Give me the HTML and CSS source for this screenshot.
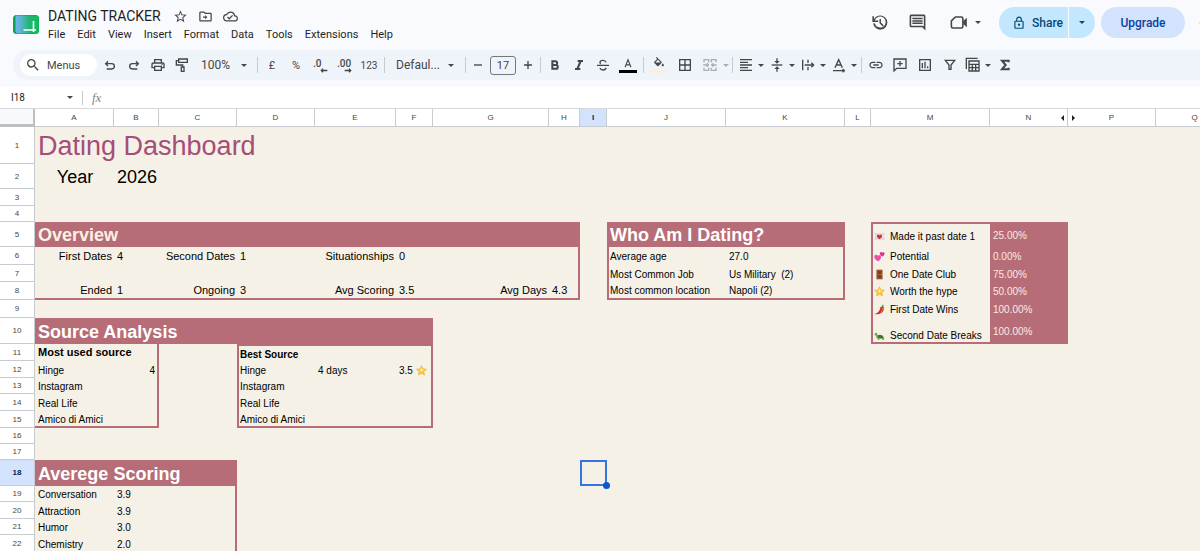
FILE: index.html
```html
<!DOCTYPE html>
<html lang="en">
<head>
<meta charset="UTF-8">
<meta name="viewport" content="width=device-width, initial-scale=1.0">
<title>DATING TRACKER</title>
<link rel="stylesheet" href="styles.css">
</head>
<body>

<svg class="sprite" aria-hidden="true">
  <symbol id="star" viewBox="0 0 16 16">
    <path d="M8 1l2.100 4.600 5 .6-3.700 3.400 1 4.900L8 12.100l-4.400 2.400 1-4.900L.9 6.200l5-.6z" fill="#fbc634" stroke="#eda52c" stroke-width=".8" stroke-linejoin="round"/>
    <path d="M8 3.500l1.300 3.200 3.200.4-3.600 1.400L8 11 7 8.500 3.500 7.100l3.300-.4z" fill="#fff0a0"/>
  </symbol>
</svg>

<header class="header">
  <svg class="logo" viewBox="0 0 26 19" aria-label="Sheets home">
    <defs>
      <linearGradient id="logoFill" x1="0" x2="1" y1="0" y2="0">
        <stop offset="0" stop-color="#6db5ee"/>
        <stop offset=".25" stop-color="#58b6c8"/>
        <stop offset=".6" stop-color="#1fb574"/>
        <stop offset="1" stop-color="#0fbd58"/>
      </linearGradient>
    </defs>
    <rect width="26" height="19" rx="3.500" fill="#12a150"/>
    <path d="M3 .5h20.500a2 2 0 0 1 2 2v14a2 2 0 0 1-2 2H5a2.500 2.500 0 0 1-2.500-2.500V2z" fill="url(#logoFill)"/>
    <path d="M10.500 15h12.500M20.500 6v11" stroke="#fff" stroke-width="1.600" fill="none"/>
  </svg>
  <div class="doc">
    <div class="doc-title">
      <h1>DATING TRACKER</h1>
      <button aria-label="Star"><svg viewBox="0 0 24 24"><path d="M22 9.240l-7.190-.62L12 2 9.190 8.630 2 9.240l5.460 4.730L5.820 21 12 17.270 18.180 21l-1.630-7.030L22 9.240zM12 15.400l-3.760 2.270 1-4.280-3.320-2.880 4.380-.38L12 6.100l1.710 4.040 4.380.38-3.320 2.880 1 4.280L12 15.400z"/></svg></button>
      <button aria-label="Move"><svg viewBox="0 0 24 24"><path d="M20 6h-8l-2-2H4c-1.100 0-2 .9-2 2v12c0 1.100.9 2 2 2h16c1.100 0 2-.9 2-2V8c0-1.100-.9-2-2-2zm0 12H4V6h5.170l2 2H20v10zm-8.500-1.500L15 13l-3.500-3.500v2.500H8v2h3.500z"/></svg></button>
      <button aria-label="Saved to Drive"><svg viewBox="0 0 24 24"><path d="M19.350 10.040A7.490 7.490 0 0 0 12 4C9.110 4 6.600 5.640 5.350 8.040A5.994 5.994 0 0 0 0 14c0 3.310 2.690 6 6 6h13c2.760 0 5-2.240 5-5 0-2.640-2.050-4.780-4.650-4.960zM19 18H6c-2.210 0-4-1.790-4-4 0-2.050 1.530-3.760 3.560-3.970l1.070-.11.5-.95A5.469 5.469 0 0 1 12 6c2.620 0 4.880 1.860 5.390 4.430l.3 1.500 1.530.11A2.980 2.980 0 0 1 22 15c0 1.650-1.350 3-3 3zm-9-3.820l-2.090-2.090L6.500 13.500 10 17l6.010-6.010-1.410-1.410z"/></svg></button>
    </div>
    <nav class="menu">
      <button>File</button>
      <button>Edit</button>
      <button>View</button>
      <button>Insert</button>
      <button>Format</button>
      <button>Data</button>
      <button>Tools</button>
      <button>Extensions</button>
      <button>Help</button>
    </nav>
  </div>
  <div class="actions">
    <button class="action" aria-label="Version history"><svg viewBox="0 0 24 24"><path d="M13 3a9 9 0 0 0-8 4.900V4H3v7.500h7.500v-2H6.100A7 7 0 1 1 6 12.800l-2 .5A9 9 0 1 0 13 3zm-1 4.500V13l4 4 1.300-1.400-3.500-3.500V7.500z"/></svg></button>
    <button class="action" aria-label="Comments"><svg viewBox="0 0 24 24"><path d="M22 4c0-1.100-.9-2-2-2H4c-1.100 0-2 .9-2 2v12c0 1.100.9 2 2 2h14l4 4V4zm-2 13.200L18.800 16H4V4h16v13.200zM5.500 12h13v2h-13zm0-3h13v2h-13zm0-3h13v2h-13z"/></svg></button>
    <button class="action meet" aria-label="Join a call"><svg viewBox="0 0 24 24"><path d="M8 5h7.500a2 2 0 0 1 2 2v10a2 2 0 0 1-2 2H5a2 2 0 0 1-2-2v-7z" fill="none" stroke="#444746" stroke-width="2" stroke-linejoin="round"/><path d="M18 10l4.500-4v12L18 14z"/></svg><span class="caret"></span></button>
    <div class="share">
      <button class="share-main"><svg viewBox="0 0 24 24"><path d="M18 8h-1V6A5 5 0 0 0 7 6v2H6c-1.100 0-2 .9-2 2v10c0 1.100.9 2 2 2h12c1.100 0 2-.9 2-2V10c0-1.100-.9-2-2-2zM9 6a3 3 0 0 1 6 0v2H9zm9 14H6V10h12zm-6-3a2 2 0 1 0 0-4 2 2 0 0 0 0 4z"/></svg>Share</button>
      <button class="share-more" aria-label="Share options"><span class="caret"></span></button>
    </div>
    <button class="upgrade">Upgrade</button>
    <svg class="spark" viewBox="0 0 16 16"><path d="M0 8q7-1 8-8 1 7 8 8-7 1-8 8-1-7-8-8z" fill="#fbbc04"/></svg>
  </div>
</header>

<div class="toolbar">
  <button class="menus"><svg viewBox="0 0 24 24"><path d="M15.500 14h-.79l-.28-.27A6.471 6.471 0 0 0 16 9.500 6.500 6.500 0 1 0 9.500 16c1.610 0 3.090-.59 4.230-1.570l.27.28v.79l5 4.990L20.490 19l-4.990-5zm-6 0C7.010 14 5 11.990 5 9.500S7.010 5 9.500 5 14 7.010 14 9.500 11.990 14 9.500 14z"/></svg>Menus</button>
  <button aria-label="Undo"><svg viewBox="0 0 24 24"><path d="M9 6.500L5.500 10 9 13.500M6 10h8.500a4 4 0 0 1 0 8H7" class="line"/></svg></button>
  <button aria-label="Redo"><svg viewBox="0 0 24 24"><path d="M15 6.500l3.500 3.500-3.500 3.500M18 10H9.500a4 4 0 0 0 0 8H17" class="line"/></svg></button>
  <button aria-label="Print"><svg viewBox="0 0 24 24"><path d="M19 8h-1V3H6v5H5c-1.660 0-3 1.340-3 3v6h4v4h12v-4h4v-6c0-1.660-1.340-3-3-3zM8 5h8v3H8V5zm8 14H8v-4h8v4zm4-4h-2v-2H6v2H4v-4c0-.55.45-1 1-1h14c.55 0 1 .45 1 1v4z"/><circle cx="18" cy="11.500" r="1"/></svg></button>
  <button aria-label="Paint format"><svg viewBox="0 0 24 24"><path d="M7 3h13v5H7zM7 5.500H3.500V12H13v3M11 15h4v6.500h-4z" class="line"/></svg></button>
  <label class="pick zoom"><select aria-label="Zoom"><option>100%</option></select><span class="caret"></span></label>
  <span class="sep"></span>
  <button aria-label="Format as currency">£</button>
  <button aria-label="Format as percent">%</button>
  <button class="decimal" aria-label="Decrease decimal places">.0<svg viewBox="0 0 12 6"><path d="M11 3H2M4.500.5L2 3l2.500 2.500" class="line"/></svg></button>
  <button class="decimal" aria-label="Increase decimal places">.00<svg viewBox="0 0 12 6"><path d="M1 3h9M7.500.5L10 3 7.500 5.500" class="line"/></svg></button>
  <button class="wide small">123</button>
  <span class="sep"></span>
  <label class="pick font"><select aria-label="Font"><option>Defaul...</option></select><span class="caret"></span></label>
  <span class="sep"></span>
  <button class="step" aria-label="Decrease font size"><svg viewBox="0 0 24 24"><path d="M6 12h12" class="line"/></svg></button>
  <input class="size" aria-label="Font size" value="17">
  <button class="step" aria-label="Increase font size"><svg viewBox="0 0 24 24"><path d="M6 12h12M12 6v12" class="line"/></svg></button>
  <span class="sep"></span>
  <button aria-label="Bold"><svg viewBox="0 0 24 24"><path d="M8 6.500h4.500a2.700 2.700 0 0 1 0 5.500H8zM8 12h5.300a2.900 2.900 0 0 1 0 5.800H8z" class="line heavy"/></svg></button>
  <button aria-label="Italic"><svg viewBox="0 0 24 24"><path d="M10 6h8M6 18h8M14.500 6l-5 12" class="line heavy"/></svg></button>
  <button aria-label="Strikethrough"><svg viewBox="0 0 24 24"><path d="M3 12.500h18M16.500 8c-.5-2-2-3-4.500-3-2.700 0-4.500 1.200-4.500 3 0 1 .4 1.800 1 2.300M7.500 16.500c.6 1.900 2.200 3 4.500 3 2.700 0 4.500-1.200 4.500-3.200" class="line"/></svg></button>
  <button class="wide swatch text" aria-label="Text color"><svg viewBox="0 0 24 24"><path d="M6.500 19L12 5l5.500 14M8.500 14.500h7" class="line"/></svg></button>
  <span class="sep"></span>
  <button class="wide swatch fill" aria-label="Fill color"><svg viewBox="0 0 24 24"><path d="M16.560 8.940L7.620 0 6.210 1.410l2.380 2.380-5.150 5.150a1.490 1.490 0 0 0 0 2.120l5.500 5.500c.29.29.68.44 1.060.44s.77-.15 1.060-.44l5.500-5.500c.59-.58.59-1.530 0-2.120zM5.210 10L10 5.210 14.790 10H5.210zM19 11.500s-2 2.170-2 3.500c0 1.100.9 2 2 2s2-.9 2-2c0-1.330-2-3.500-2-3.500z"/></svg></button>
  <button class="wide" aria-label="Borders"><svg viewBox="0 0 24 24"><path d="M4 4h16v16H4zM12 4v16M4 12h16" class="line"/></svg></button>
  <button class="merge" aria-label="Merge cells"><svg viewBox="0 0 24 24"><path d="M3 8V4h7v4M14 8V4h7v4M3 16v4h7v-4M14 16v4h7v-4M2 12h7M7 9.500L9.500 12 7 14.500M22 12h-7M17 9.500L14.500 12l2.500 2.500" class="line"/></svg></button>
  <button class="drop merge" aria-label="Merge options"><span class="caret"></span></button>
  <span class="sep"></span>
  <button class="split" aria-label="Horizontal align"><svg viewBox="0 0 24 24"><path d="M3 4h18M3 8h12M3 12h18M3 16h12M3 20h18" class="line"/></svg><span class="caret"></span></button>
  <button class="split" aria-label="Vertical align"><svg viewBox="0 0 24 24"><path d="M4 12h16" class="line"/><path d="M11 2h2v4h3l-4 4-4-4h3zM11 22h2v-4h3l-4-4-4 4h3z"/></svg><span class="caret"></span></button>
  <button class="split" aria-label="Text wrapping"><svg viewBox="0 0 24 24"><path d="M4 4v16M12 4v5M12 15v5M7 12h13M17 8.500l3.500 3.500-3.500 3.500" class="line"/></svg><span class="caret"></span></button>
  <button class="split" aria-label="Text rotation"><svg viewBox="0 0 24 24"><path d="M6 16l5.500-12L17 16M8 12h7M3 20.500h17M17.500 18l2.500 2.500-2.500 2.500" class="line"/></svg><span class="caret"></span></button>
  <span class="sep"></span>
  <button aria-label="Insert link"><svg viewBox="0 0 24 24"><path d="M3.900 12c0-1.710 1.390-3.100 3.100-3.100h4V7H7c-2.760 0-5 2.240-5 5s2.240 5 5 5h4v-1.900H7c-1.710 0-3.100-1.390-3.100-3.100zM8 13h8v-2H8v2zm9-6h-4v1.900h4c1.710 0 3.100 1.390 3.100 3.100s-1.390 3.100-3.100 3.100h-4V17h4c2.760 0 5-2.240 5-5s-2.240-5-5-5z"/></svg></button>
  <button aria-label="Insert comment"><svg viewBox="0 0 24 24"><path d="M3 3h18v14H7l-4 4zM12 6v8M8 10h8" class="line"/></svg></button>
  <button class="wide" aria-label="Insert chart"><svg viewBox="0 0 24 24"><path d="M4 4h16v16H4zM8 9v8M12 7v10M16 14v3" class="line"/></svg></button>
  <button aria-label="Create a filter"><svg viewBox="0 0 24 24"><path d="M5 5h14l-5.500 7v6.500h-3V12z" class="line"/></svg></button>
  <button class="split" aria-label="Table views"><svg viewBox="0 0 24 24"><path d="M2 18V2h17M6 6h15v15H6zM6 11h15M6 16h15M11 11v10M16 11v10" class="line"/></svg><span class="caret"></span></button>
  <button aria-label="Functions"><svg viewBox="0 0 24 24"><path d="M17.500 8V5.500H7.500L13 12l-5.500 6.500h10V16" class="line heavy"/></svg></button>
</div>

<div class="formula">
  <input class="name-box" aria-label="Name box" value="I18">
  <span class="caret"></span>
  <label class="fx" for="formula">fx</label>
  <input id="formula" class="formula-input">
</div>

<main class="sheet">
<table>
  <colgroup>
    <col class="c-head"><col class="c-a"><col class="c-b"><col class="c-c"><col class="c-c"><col class="c-e"><col class="c-f"><col class="c-g"><col class="c-h"><col class="c-i"><col class="c-j"><col class="c-j"><col class="c-l"><col class="c-j"><col class="c-c"><col class="c-p"><col class="c-c">
  </colgroup>
  <thead>
    <tr>
      <td class="corner"></td><th>A</th><th>B</th><th>C</th><th>D</th><th>E</th><th>F</th><th>G</th><th>H</th><th class="active">I</th><th>J</th><th>K</th><th>L</th><th>M</th><th class="hide-left">N</th><th class="hide-right">P</th><th>Q</th>
    </tr>
  </thead>
  <tbody>
    <tr class="r-title"><th>1</th><td class="title" colspan="5">Dating Dashboard</td><td colspan="11"></td></tr>
    <tr class="r-year"><th>2</th><td class="year center">Year</td><td class="year" colspan="2">2026</td><td colspan="13"></td></tr>
    <tr class="r-17"><th>3</th><td colspan="16"></td></tr>
    <tr class="r-16"><th>4</th><td colspan="16"></td></tr>
    <tr class="r-year"><th>5</th><td class="band cream" colspan="8">Overview</td><td></td><td class="band" colspan="2">Who Am I Dating?</td><td></td><td class="bl bt"><svg class="emoji" viewBox="0 0 16 16"><rect x="1" y="3" width="14" height="10" fill="#e0e4ea"/><path d="M1 3l7 6 7-6M1 13l5-5M15 13l-5-5" fill="none" stroke="#b9c0ca"/><path d="M8 12C3 9 4 5 6.300 5 7.500 5 8 6.200 8 6.200S8.500 5 9.700 5C12 5 13 9 8 12z" fill="#e8262c"/></svg>Made it past date 1</td><td class="rate">25.00%</td><td></td><td></td></tr>
    <tr class="r-18 stats"><th>6</th><td class="right">First Dates</td><td>4</td><td class="right">Second Dates</td><td>1</td><td class="right">Situationships</td><td>0</td><td></td><td class="br"></td><td></td><td class="bl">Average age</td><td class="br">27.0</td><td></td><td class="bl"><svg class="emoji" viewBox="0 0 16 16"><path d="M6 15C-1 12-.5 6 2.500 5.500 4.500 5.200 5.500 7 5.500 7s2-1.500 3.700-.3C11.500 8.500 10 12.500 6 15z" fill="#ee4fa5"/><path d="M12.500 8C8 6.500 7.500 3 9.500 1.800 11 1 12 2.200 12 2.200s1.400-1 2.700 0c1.600 1.400.3 4.300-2.200 5.800z" fill="#d9368c"/></svg>Potential</td><td class="rate">0.00%</td><td></td><td></td></tr>
    <tr class="r-17"><th>7</th><td colspan="7"></td><td class="br"></td><td></td><td class="bl">Most Common Job</td><td class="br">Us Military &nbsp;(2)</td><td></td><td class="bl"><svg class="emoji" viewBox="0 0 16 16"><rect x="3.500" y="1" width="9" height="14" fill="#9a5632"/><path d="M5.500 3h5v4h-5zM5.500 9h5v4h-5z" fill="#7a3f22"/><circle cx="11.500" cy="8" r=".8" fill="#e8c15a"/></svg>One Date Club</td><td class="rate">75.00%</td><td></td><td></td></tr>
    <tr class="r-18 stats"><th>8</th><td class="right bb">Ended</td><td class="bb">1</td><td class="right bb">Ongoing</td><td class="bb">3</td><td class="right bb">Avg Scoring</td><td class="bb">3.5</td><td class="right bb">Avg Days</td><td class="bb br">4.3</td><td></td><td class="bl bb">Most common location</td><td class="br bb">Napoli (2)</td><td></td><td class="bl"><svg class="emoji"><use href="#star"/></svg>Worth the hype</td><td class="rate">50.00%</td><td></td><td></td></tr>
    <tr class="r-18"><th>9</th><td colspan="12"></td><td class="bl"><svg class="emoji" viewBox="0 0 16 16"><path d="M11 4c4 1 4 4 2 7s-6 4.500-12.500 3.500C6 13 8 10 9 6z" fill="#dc2b25"/><path d="M12 6c1 2 0 5-3 6.500" fill="none" stroke="#f78172"/><path d="M9 6c1-2 3-2.500 5.500-.5M12 4l1.500-3" fill="none" stroke="#4f8f3b" stroke-width="1.600"/></svg>First Date Wins</td><td class="rate">100.00%</td><td></td><td></td></tr>
    <tr class="r-26"><th>10</th><td class="band" colspan="6">Source Analysis</td><td colspan="6"></td><td class="bl bb low"><svg class="emoji" viewBox="0 0 16 16"><path d="M4 10c1-4 8-5 11 2H4z" fill="#4a7a39"/><path d="M1 5.500C2 3 5 4 5 6.500L6 11H4L2.500 8C1 8 .5 6.500 1 5.500zM5 12h10l-1 2.500h-2l-.5-1.500H8l-.5 1.500h-2z" fill="#6fa64d"/><path d="M8 8.500l1 3M11.500 8l-.5 3.500" stroke="#2f5a28"/></svg>Second Date Breaks</td><td class="rate">100.00%</td><td></td><td></td></tr>
    <tr class="r-17"><th>11</th><td class="strong large" colspan="2"><div class="edge">Most used source</div></td><td></td><td class="strong bl bt">Best Source</td><td class="bt"></td><td class="bt br"></td><td colspan="10"></td></tr>
    <tr class="r-17"><th>12</th><td>Hinge</td><td class="right br">4</td><td></td><td class="bl">Hinge</td><td>4 days</td><td class="right br">3.5 <svg class="emoji tail"><use href="#star"/></svg></td><td colspan="10"></td></tr>
    <tr class="r-16"><th>13</th><td>Instagram</td><td class="br"></td><td></td><td class="bl">Instagram</td><td></td><td class="br"></td><td colspan="10"></td></tr>
    <tr class="r-17"><th>14</th><td>Real Life</td><td class="br"></td><td></td><td class="bl">Real Life</td><td></td><td class="br"></td><td colspan="10"></td></tr>
    <tr class="r-17"><th>15</th><td class="bb">Amico di Amici</td><td class="br bb"></td><td></td><td class="bl bb">Amico di Amici</td><td class="bb"></td><td class="br bb"></td><td colspan="10"></td></tr>
    <tr class="r-16"><th>16</th><td colspan="16"></td></tr>
    <tr class="r-16"><th>17</th><td colspan="16"></td></tr>
    <tr class="r-26"><th class="active">18</th><td class="band" colspan="3">Averege Scoring</td><td colspan="5"></td><td class="selected"></td><td colspan="7"></td></tr>
    <tr class="r-16"><th>19</th><td>Conversation</td><td>3.9</td><td class="br"></td><td colspan="13"></td></tr>
    <tr class="r-17"><th>20</th><td>Attraction</td><td>3.9</td><td class="br"></td><td colspan="13"></td></tr>
    <tr class="r-16"><th>21</th><td>Humor</td><td>3.0</td><td class="br"></td><td colspan="13"></td></tr>
    <tr class="r-17"><th>22</th><td>Chemistry</td><td>2.0</td><td class="br"></td><td colspan="13"></td></tr>
  </tbody>
</table>
</main>

</body>
</html>
```

FILE: styles.css
```css
* {
    box-sizing: border-box;
}
body {
    margin: 0;
    height: 100vh;
    display: flex;
    flex-direction: column;
    overflow: hidden;
    background: #f9fafe;
    color: #1f1f1f;
    font-family: Roboto, "Liberation Sans", sans-serif;
}
button, input, select {
    font: inherit;
    color: inherit;
    border: 0;
    padding: 0;
    margin: 0;
    background: none;
    outline: none;
}
button {
    cursor: pointer;
    display: flex;
    align-items: center;
    justify-content: center;
}
svg {
    flex: none;
    fill: #444746;
}
.sprite {
    display: none;
}
.line {
    fill: none;
    stroke: #444746;
    stroke-width: 2;
}
.heavy {
    stroke-width: 3;
}
.caret {
    flex: none;
    width: 6px;
    border: 3px solid transparent;
    border-top-color: #444746;
    border-bottom: 0;
}

/* header */
.header {
    display: flex;
    flex: none;
    align-items: flex-start;
    padding: 7px 0 8px 13px;
    overflow: hidden;
}
.logo {
    width: 26px;
    height: 19px;
    margin: 8px 9px 0 0;
}
.doc-title {
    display: flex;
    align-items: center;
    height: 19px;
}
.doc-title h1 {
    margin: 0 7px 0 0;
    font-size: 14px;
    font-weight: 400;
    line-height: 19px;
}
.doc-title button {
    width: 25px;
}
.doc-title svg {
    width: 15px;
    height: 15px;
}
.menu {
    display: flex;
    gap: 12px;
    font-size: 11px;
    line-height: 18px;
}
.actions {
    display: flex;
    align-items: center;
    margin-left: auto;
}
.action {
    width: 38px;
    height: 31px;
}
.action svg {
    width: 19px;
    height: 19px;
}
.meet {
    width: 54px;
    gap: 7px;
    padding-left: 4px;
    margin-right: 9px;
}
.share, .upgrade {
    height: 31px;
    border-radius: 16px;
    font-size: 12px;
    font-weight: 500;
}
.share {
    display: flex;
    overflow: hidden;
    background: #c2e7ff;
    color: #064a77;
    margin-right: 6px;
}
.share svg {
    width: 14px;
    height: 14px;
    fill: #064a77;
}
.share-main {
    width: 70px;
    gap: 6px;
    padding-left: 8px;
    border-right: 1px solid #f9fafe;
}
.share-more {
    width: 26px;
}
.share .caret {
    border-top-color: #064a77;
}
.upgrade {
    width: 84px;
    background: #d3e3fd;
    color: #0842a0;
}
.spark {
    width: 16px;
    height: 16px;
    margin: 0 -14px 0 13px;
}

/* toolbar */
.toolbar {
    display: flex;
    flex: none;
    align-items: center;
    margin: -2px 0 7px 13px;
    padding: 3px 7px;
    border-radius: 15px 0 0 15px;
    background: #eff3fa;
    color: #444746;
    font-size: 11px;
}
.toolbar button {
    flex: none;
    width: 24px;
    height: 24px;
}
.toolbar svg {
    width: 16px;
    height: 16px;
}
.toolbar .menus {
    width: 77px;
    height: 22px;
    margin-right: 1px;
    padding-left: 5px;
    justify-content: flex-start;
    gap: 6px;
    border-radius: 11px;
    background: #fff;
}
.toolbar .wide {
    width: 26px;
}
.toolbar .small {
    font-size: 10px;
}
.toolbar .step {
    width: 20px;
}
.toolbar .split {
    width: 31px;
    justify-content: flex-start;
}
.toolbar .split svg {
    margin: 0 4px 0 3px;
}
.toolbar .drop {
    width: 8px;
}
.merge {
    opacity: .4;
}
.sep {
    flex: none;
    width: 1px;
    height: 16px;
    margin: 0 2px;
    background: #c7cbd1;
}
.pick {
    display: flex;
    align-items: center;
    flex: none;
    font-size: 12px;
}
.pick select {
    appearance: none;
    flex: 1;
    min-width: 0;
}
.zoom {
    width: 61px;
    padding: 0 8px 0 7px;
}
.font {
    width: 76px;
    padding: 0 9px;
}
.toolbar .decimal {
    position: relative;
    justify-content: flex-start;
    padding: 0 0 4px 5px;
    font-size: 10px;
    font-weight: 500;
}
.toolbar .decimal svg {
    position: absolute;
    right: 4px;
    bottom: 4px;
    width: 8px;
    height: 5px;
}
.size {
    width: 26px;
    height: 19px;
    margin: 0 2px;
    border: 1px solid #747775;
    border-radius: 3px;
    text-align: center;
}
.toolbar .swatch {
    flex-direction: column;
}
.swatch svg {
    height: 13px;
}
.swatch::after {
    content: "";
    width: 18px;
    height: 3px;
    background: #000;
}
.swatch.fill::after {
    background: #f7efe2;
}

/* formula bar */
.formula {
    display: flex;
    flex: none;
    align-items: center;
    height: 22px;
    padding-left: 11px;
    background: #fff;
    border-bottom: 1px solid #d5d8dc;
    font-size: 10px;
}
.name-box {
    width: 56px;
}
.fx {
    margin-left: 9px;
    padding-left: 9px;
    border-left: 1px solid #c7cbd1;
    color: #80868b;
    font: italic 13px/14px "Liberation Serif", serif;
}
.formula-input {
    flex: 1;
    margin-left: 8px;
}

/* grid */
.sheet {
    flex: 1;
    min-height: 0;
    overflow: hidden;
    background: #f5f1e6;
    color: #000;
    font: 10px/13px "Liberation Sans", Arial, sans-serif;
}
table {
    table-layout: fixed;
    width: 1234px;
    border-collapse: separate;
    border-spacing: 0;
}
.c-head { width: 35px; }
.c-a { width: 79px; }
.c-b { width: 45px; }
.c-c { width: 78px; }
.c-e { width: 81px; }
.c-f { width: 37px; }
.c-g { width: 116px; }
.c-h { width: 31px; }
.c-i { width: 27px; }
.c-j { width: 119px; }
.c-l { width: 26px; }
.c-p { width: 88px; }
.r-16 { height: 16px; }
.r-17 { height: 17px; }
.r-18 { height: 18px; }
.r-26 { height: 26px; }
.r-year { height: 25px; }
.r-title { height: 37px; }

th {
    padding: 1px 0 0;
    background: #fff;
    border: solid #c9cccf;
    border-width: 0 1px 1px 0;
    color: #444746;
    font-size: 8px;
    font-weight: 400;
    line-height: 14px;
}
thead tr {
    height: 18px;
}
.corner {
    background: #f8f9fa;
    border: solid #bdbfc1;
    border-width: 0 2px 3px 0;
}
th.active {
    background: #d3e3fd;
    color: #041e49;
    font-weight: 700;
}
.hide-left, .hide-right {
    position: relative;
}
.hide-left::after, .hide-right::after {
    content: "";
    position: absolute;
    top: 6px;
    border: 3px solid transparent;
}
.hide-left::after {
    right: 3px;
    border-left: 0;
    border-right-color: #222;
}
.hide-right::after {
    left: 4px;
    border-right: 0;
    border-left-color: #222;
}
td {
    padding: 1px 2px 0 3px;
    white-space: nowrap;
    vertical-align: middle;
    border: 0 solid #b76d77;
}
.stats td:nth-child(-n+9) {
    font-size: 11px;
}
.right {
    text-align: right;
}
.center {
    text-align: center;
}
.title {
    color: #a64d79;
    font-size: 27px;
    line-height: 32px;
}
.year {
    font-size: 18px;
    line-height: 22px;
}
.band {
    background: #b76d77;
    color: #fff;
    font-size: 18px;
    font-weight: 700;
    line-height: 22px;
}
.cream {
    color: #fbf1e3;
}
.rate {
    background: #b76d77;
    color: #fae9e4;
}
.strong {
    font-weight: 700;
}
.bt { border-top-width: 2px; }
.br { border-right-width: 2px; }
.bb { border-bottom-width: 2px; }
.bl {
    border-left-width: 2px;
    padding-left: 1px;
}
td.large {
    padding-top: 0;
    padding-right: 0;
    font-size: 11px;
}
.edge {
    border-right: 2px solid #b76d77;
    line-height: 17px;
}
.low {
    vertical-align: bottom;
}
.emoji {
    width: 11px;
    height: 11px;
    margin-right: 5px;
    vertical-align: -2px;
}
.tail {
    margin-right: 3px;
}
.selected {
    position: relative;
    box-shadow: inset 0 0 0 2px #3574e2;
}
.selected::after {
    content: "";
    position: absolute;
    right: -3px;
    bottom: -3px;
    width: 7px;
    height: 7px;
    border-radius: 50%;
    background: #0b57d0;
}
```
